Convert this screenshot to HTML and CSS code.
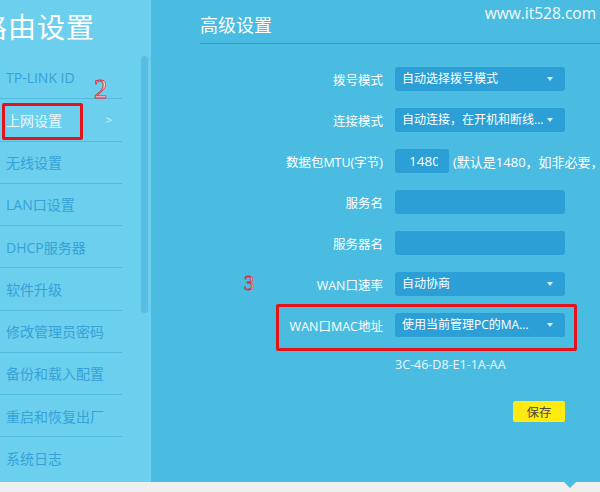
FILE: index.html
```html
<!DOCTYPE html>
<html lang="zh-CN">
<head>
    <meta charset="utf-8">
    <link rel="stylesheet" href="styles.css">
</head>
<body>
    <div class="page">
        <!--Sidebar-->
        <aside class="side">
            <div class="brand">路由设置</div>
            <ul class="menu">
                <li>TP-LINK ID</li>
                <li class="active">上网设置<span class="arrow">&gt;</span></li>
                <li>无线设置</li>
                <li>LAN口设置</li>
                <li>DHCP服务器</li>
                <li>软件升级</li>
                <li>修改管理员密码</li>
                <li>备份和载入配置</li>
                <li>重启和恢复出厂</li>
                <li>系统日志</li>
            </ul>
            <div class="scrollbar"></div>
        </aside>
        <!--Main panel-->
        <main class="main">
            <div class="site">www.it528.com</div>
            <h2 class="title">高级设置</h2>
            <div class="form">
                <div class="row">
                    <label>拨号模式</label>
                    <div class="select">自动选择拨号模式</div>
                </div>
                <div class="row">
                    <label>连接模式</label>
                    <div class="select">自动连接，在开机和断线...</div>
                </div>
                <div class="row">
                    <label>数据包MTU(字节)</label>
                    <input class="field short" type="text" value="1480">
                    <span class="hint">(默认是1480，如非必要，请勿修改)</span>
                </div>
                <div class="row">
                    <label>服务名</label>
                    <div class="field"></div>
                </div>
                <div class="row">
                    <label>服务器名</label>
                    <div class="field"></div>
                </div>
                <div class="row">
                    <label>WAN口速率</label>
                    <div class="select">自动协商</div>
                </div>
                <div class="row">
                    <label>WAN口MAC地址</label>
                    <div class="select">使用当前管理PC的MA...</div>
                </div>
                <div class="row mac">
                    <label></label>
                    <span>3C-46-D8-E1-1A-AA</span>
                </div>
                <div class="row actions">
                    <label></label>
                    <button class="save">保存</button>
                </div>
            </div>
        </main>
    </div>
    <div class="footer"><span class="notch"></span></div>

    <!--Annotations-->
    <div class="mark box-menu"></div>
    <div class="mark box-mac"></div>
    <span class="num num-2">2</span>
    <span class="num num-3">3</span>
</body>
</html>
```

FILE: styles.css
```css
body {
    margin: 0;
    width: 600px;
    height: 492px;
    overflow: hidden;
    position: relative;
    font-family: "Open Sans", "Noto Sans CJK SC", sans-serif;
    background-color: #efefef;
}

.page {
    display: flex;
    height: 482px;
}

/* sidebar */
.side {
    width: 151px;
    flex-shrink: 0;
    background-color: #6dcfee;
    position: relative;
    overflow: hidden;
}
.brand {
    margin-left: -21px;
    padding: 13px 0 16px;
    font-size: 28px;
    line-height: 28px;
    color: #fff;
    white-space: nowrap;
    letter-spacing: 1px;
}
.menu {
    list-style: none;
    margin: 0;
    padding: 0;
}
.menu li {
    width: 122px;
    height: 42.25px;
    box-sizing: border-box;
    display: flex;
    align-items: center;
    padding-left: 6px;
    border-bottom: 1px solid #52b9df;
    font-size: 14px;
    color: #35a2d8;
    white-space: nowrap;
}
.menu li:last-child {
    border-bottom: none;
}
.menu li.active {
    color: #eaf8fd;
}
.menu .arrow {
    margin-left: auto;
    margin-right: 10px;
    font-size: 11px;
    color: #d8f1fb;
}
.scrollbar {
    position: absolute;
    left: 141px;
    top: 56px;
    width: 7px;
    height: 257px;
    border-radius: 4px;
    background-color: #56bee4;
}

/* main panel */
.main {
    flex: 1;
    background-color: #4abce1;
    padding-left: 49px;
    position: relative;
    overflow: hidden;
    color: #fff;
}
.site {
    position: absolute;
    right: 4px;
    top: 2px;
    font-size: 15.5px;
    color: #f4fbfe;
}
.title {
    margin: 0;
    padding: 13px 0 6px;
    font-size: 18px;
    line-height: 24px;
    font-weight: normal;
    border-bottom: 1px solid #2a98d0;
}
.form {
    margin-top: 23px;
    display: flex;
    flex-direction: column;
    gap: 17px;
}
.row {
    display: flex;
    align-items: center;
    height: 24px;
    white-space: nowrap;
}
.row label {
    width: 183px;
    margin-right: 12px;
    flex-shrink: 0;
    text-align: right;
    font-size: 12.5px;
}
.select, .field {
    width: 170px;
    height: 24px;
    flex-shrink: 0;
    box-sizing: border-box;
    border-radius: 3px;
    background-color: #2c9fd7;
    font-size: 12px;
    line-height: 24px;
}
.select {
    position: relative;
    padding: 0 20px 0 7px;
    overflow: hidden;
    text-overflow: ellipsis;
}
.select::after {
    content: "";
    position: absolute;
    right: 12px;
    top: 10px;
    border-left: 3px solid transparent;
    border-right: 3px solid transparent;
    border-top: 4px solid #d9f0fa;
}
.field.short {
    width: 54px;
    margin: 0;
    border: none;
    outline: none;
    padding: 0 11px 0 14px;
    color: #fff;
    font-family: "Open Sans", sans-serif;
    font-size: 13.5px;
}
.hint {
    margin-left: 4px;
    font-size: 13px;
}
.row.mac {
    height: 20px;
    font-size: 12.5px;
    color: #eaf7fc;
}
.row.actions {
    margin-top: 10px;
    height: 21px;
}
.save {
    margin-left: 118px;
    width: 52px;
    height: 21px;
    padding: 0;
    border: none;
    border-radius: 2px;
    background-color: #ffea12;
    color: #4a4a3a;
    font-family: "Noto Sans CJK SC", sans-serif;
    font-size: 12.5px;
}

/* bottom strip */
.footer {
    height: 10px;
    position: relative;
}
.notch {
    position: absolute;
    left: 564px;
    top: 0;
    border-left: 6px solid transparent;
    border-right: 6px solid transparent;
    border-top: 6px solid #4abce1;
}

/* red annotations */
.mark {
    position: absolute;
    border: 3px solid #e3131c;
    border-radius: 2px;
}
.box-menu {
    left: 2px;
    top: 103px;
    width: 75px;
    height: 31px;
}
.box-mac {
    left: 276px;
    top: 304px;
    width: 295px;
    height: 41px;
}
.num {
    position: absolute;
    font-family: "Liberation Serif", serif;
    color: #f7d7dd;
    -webkit-text-stroke: 0.8px #d42a45;
}
.num-2 {
    left: 94px;
    top: 74px;
    font-size: 27px;
}
.num-3 {
    left: 244px;
    top: 272px;
    font-size: 20px;
}
```
